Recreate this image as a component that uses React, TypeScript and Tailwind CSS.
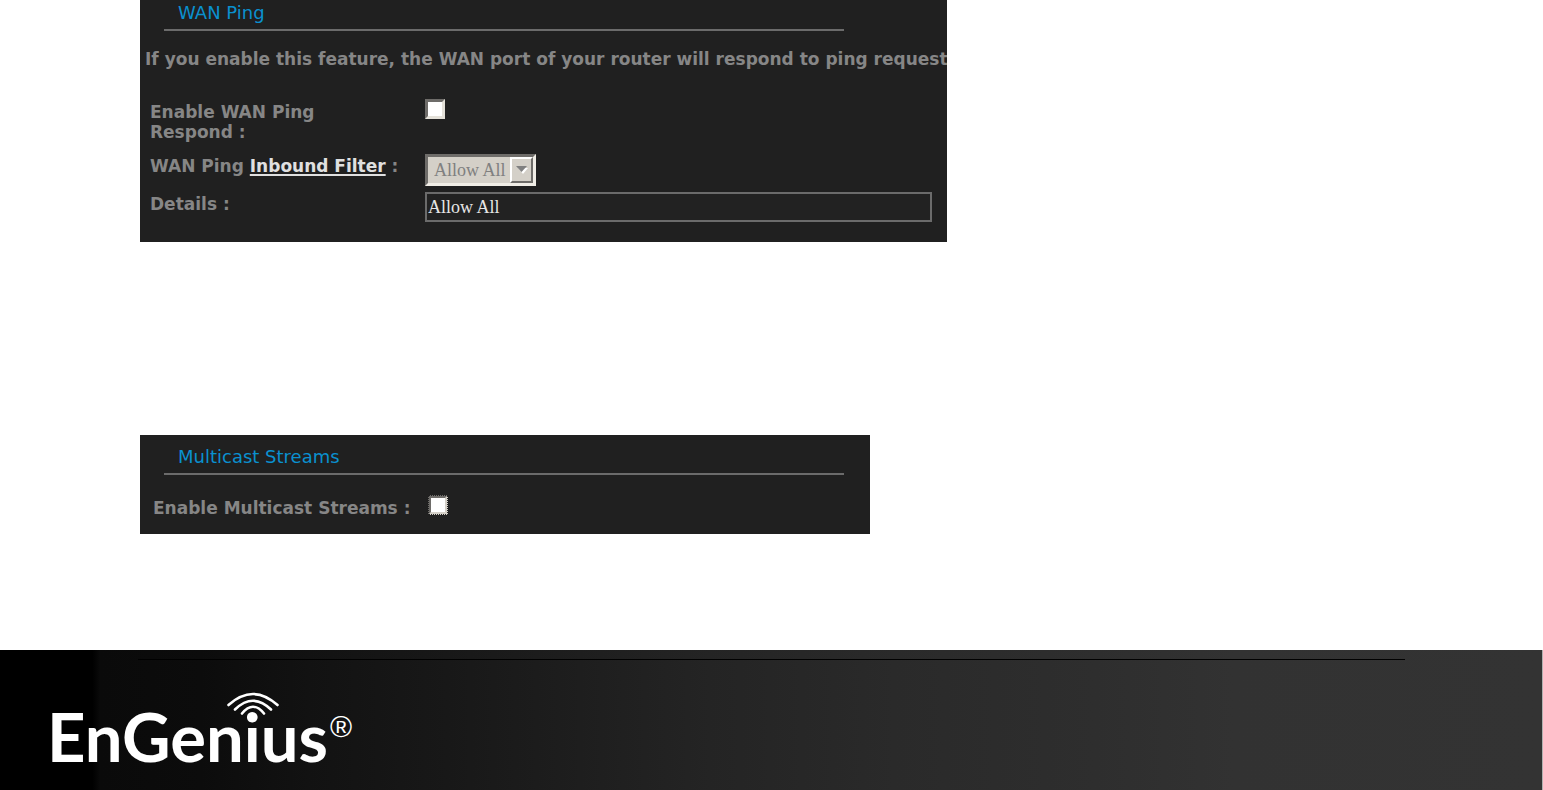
import { ReactNode } from "react"

function PanelTitle({ children }: { children: ReactNode }) {
    return (
        <h2 className="ml-6 max-w-[680px] border-b-2 border-[#6b6b6b] pb-[6px] pl-[14px] text-[18px] leading-5 font-normal text-[#0a90cf]">
            {children}
        </h2>
    )
}

function Checkbox({ id, focused = false }: { id: string; focused?: boolean }) {
    return (
        <input
            id={id}
            type="checkbox"
            className={
                focused
                    ? "block size-5 appearance-none border-[3px] border-t-[#6e6c69] border-l-[#6e6c69] border-r-[#d4d0c8] border-b-[#d4d0c8] bg-white outline-1 -outline-offset-1 outline-dotted outline-[#202020]"
                    : "block size-5 appearance-none border-[3px] border-t-[#6e6c69] border-l-[#6e6c69] border-r-[#e4e1d9] border-b-[#e4e1d9] bg-white"
            }
        />
    )
}

function Logo() {
    return (
        <svg viewBox="46 690 310 92" className="block h-[92px] w-[310px]" fill="#fff" role="img" aria-label="EnGenius">
            <text x="47" y="762" fontFamily="Lato, sans-serif" fontWeight="700" fontSize="67">EnGenius</text>
            <text x="330" y="737" fontFamily="'Liberation Sans', sans-serif" fontWeight="400" fontSize="30">®</text>
            <g fill="none" stroke="#fff" strokeWidth="2.6" strokeLinecap="round">
                <path d="M228.500 705 Q253 683 277.500 705" />
                <path d="M235 709.500 Q253 692 271 709.500" />
                <path d="M242 713.500 Q253 700 264 713.500" />
            </g>
        </svg>
    )
}

export default function App() {
    return (
        <div className="flex min-h-screen flex-col bg-white font-['DejaVu_Sans',sans-serif]">
            <main className="flex flex-1 flex-col items-start pl-[140px] text-[17px] leading-5 font-bold text-[#868686]">
                <section className="w-full max-w-[807px] overflow-hidden bg-[#202020] pt-[3px] pb-5">
                    <PanelTitle>WAN Ping</PanelTitle>
                    <p className="mt-[18px] ml-[5px] whitespace-nowrap">
                        If you enable this feature, the WAN port of your router will respond to ping request
                    </p>
                    <div className="mt-[30px] mr-[15px] ml-[10px] grid grid-cols-[275px_1fr] items-start">
                        <label htmlFor="wan-ping" className="w-[200px] pt-[3px]">Enable WAN Ping Respond :</label>
                        <Checkbox id="wan-ping" />
                        <label htmlFor="inbound-filter" className="pt-[14px]">
                            WAN Ping <a href="#" className="text-[#e0e0e0] underline decoration-2 underline-offset-2">Inbound Filter</a> :
                        </label>
                        <div className="relative mt-3 w-[111px]">
                            <select
                                id="inbound-filter"
                                disabled
                                className="block h-8 w-full appearance-none border-[3px] border-t-[#6e6c69] border-l-[#6e6c69] border-r-[#f0ede6] border-b-[#f0ede6] bg-[#d4d0c8] pl-[6px] font-['Liberation_Serif',serif] text-[18px] font-normal text-[#808080] opacity-100"
                            >
                                <option>Allow All</option>
                            </select>
                            <span className="pointer-events-none absolute top-[3px] right-[3px] flex h-[26px] w-[23px] items-center justify-center border-2 border-t-white border-l-white border-r-[#6e6c69] border-b-[#6e6c69] bg-[#d4d0c8]">
                                <svg viewBox="0 0 12 8" className="h-2 w-3">
                                    <path d="M2 2h10L7 8z" fill="#fff" />
                                    <path d="M0 0h11L5.500 6z" fill="#808080" />
                                </svg>
                            </span>
                        </div>
                        <label htmlFor="details" className="pt-2">Details :</label>
                        <input
                            id="details"
                            readOnly
                            defaultValue="Allow All"
                            className="mt-[6px] h-[30px] w-full border-2 border-[#6b6b6b] bg-[#222222] px-px font-['Liberation_Serif',serif] text-[18px] font-normal text-[#e6e6e6]"
                        />
                    </div>
                </section>

                <section className="mt-[193px] w-full max-w-[730px] bg-[#202020] pt-3 pb-4">
                    <PanelTitle>Multicast Streams</PanelTitle>
                    <div className="mt-5 ml-[13px] grid grid-cols-[275px_1fr] items-start">
                        <label htmlFor="multicast" className="pt-[3px]">Enable Multicast Streams :</label>
                        <Checkbox id="multicast" focused />
                    </div>
                </section>
            </main>

            <footer className="h-[140px] border-r border-[#b0b0b0] bg-[linear-gradient(to_right,#000_0%,#000_6%,#0a0a0a_6.500%,#0c0c0c_13%,#121212_20%,#1a1a1a_32%,#242424_46%,#2a2a2a_58%,#2e2e2e_71%,#323232_80%,#333_100%)]">
                <div className="pt-[9px] pr-[137px] pl-[138px]">
                    <hr className="border-t border-black" />
                </div>
                <div className="mt-[30px] ml-[46px]">
                    <Logo />
                </div>
            </footer>
        </div>
    )
}
